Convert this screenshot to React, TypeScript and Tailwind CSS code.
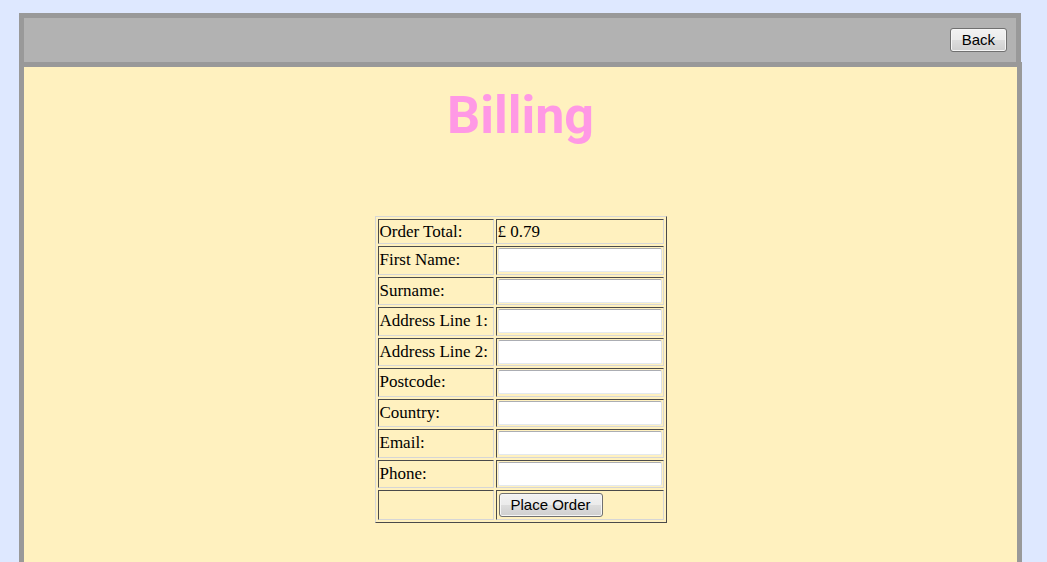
const fields = [
  { id: "first-name", label: "First Name:", type: "text" },
  { id: "surname", label: "Surname:", type: "text" },
  { id: "address-1", label: "Address Line 1:", type: "text" },
  { id: "address-2", label: "Address Line 2:", type: "text" },
  { id: "postcode", label: "Postcode:", type: "text" },
  { id: "country", label: "Country:", type: "text" },
  { id: "email", label: "Email:", type: "email" },
  { id: "phone", label: "Phone:", type: "tel" },
];

const cell =
  "border border-t-[#4a4a4a] border-l-[#4a4a4a] border-r-[#d6d6d6] border-b-[#d6d6d6] p-px text-left align-middle font-normal";

function Button({ children, type }: { children: string; type: "button" | "submit" }) {
  return (
    <button
      type={type}
      className="block h-6 rounded-[3px] border border-[#707070] bg-[linear-gradient(#f2f2f2,#ebebeb_50%,#dddddd_50%,#cfcfcf)] px-[11px] font-['Liberation_Sans',Arial,sans-serif] text-[15px] leading-5 text-black shadow-[inset_0_0_0_1px_#f6f6f6]"
    >
      {children}
    </button>
  );
}

export default function App() {
  return (
    <div className="min-h-screen bg-[#dee8ff] pt-[13px] pr-[25px] pl-[19px] font-['Liberation_Serif','Times_New_Roman',serif] text-[17px] leading-5 text-black">
      <header className="mr-px flex h-[49px] items-start justify-end border-[5px] border-b-0 border-[#999999] bg-[#b2b2b2] pt-[10px] pr-[9px]">
        <Button type="button">Back</Button>
      </header>
      <main className="flex min-h-[calc(100vh-62px)] flex-col items-center border-[5px] border-b-0 border-[#999999] bg-[#fff1bf] pt-[17px]">
        <h1 className="font-['Comic_Sans_MS',Roboto,sans-serif] text-[52px] leading-[64px] font-bold text-[#ff99e5]">
          Billing
        </h1>
        <form className="mt-[68px]" onSubmit={(e) => e.preventDefault()}>
          <table className="h-[307px] w-[292px] border-separate border-spacing-[2px] border border-t-[#d6d6d6] border-r-[#4a4a4a] border-b-[#4a4a4a] border-l-[#d6d6d6]">
            <tbody>
              <tr className="h-[25px]">
                <th scope="row" className={`${cell} w-[116px] whitespace-nowrap`}>
                  Order Total:
                </th>
                <td className={cell}>£ 0.79</td>
              </tr>
              {fields.map((f) => (
                <tr key={f.id}>
                  <th scope="row" className={`${cell} whitespace-nowrap`}>
                    <label htmlFor={f.id}>{f.label}</label>
                  </th>
                  <td className={cell}>
                    <input
                      id={f.id}
                      name={f.id}
                      type={f.type}
                      className="block h-6 w-full rounded-[2px] border border-t-[#abadb3] border-r-[#dbdfe6] border-b-[#e3e9ef] border-l-[#e2e3ea] bg-white px-1 text-[15px]"
                    />
                  </td>
                </tr>
              ))}
              <tr className="h-[30px]">
                <td className={cell}></td>
                <td className={`${cell} pl-[2px]`}>
                  <Button type="submit">Place Order</Button>
                </td>
              </tr>
            </tbody>
          </table>
        </form>
      </main>
    </div>
  );
}
